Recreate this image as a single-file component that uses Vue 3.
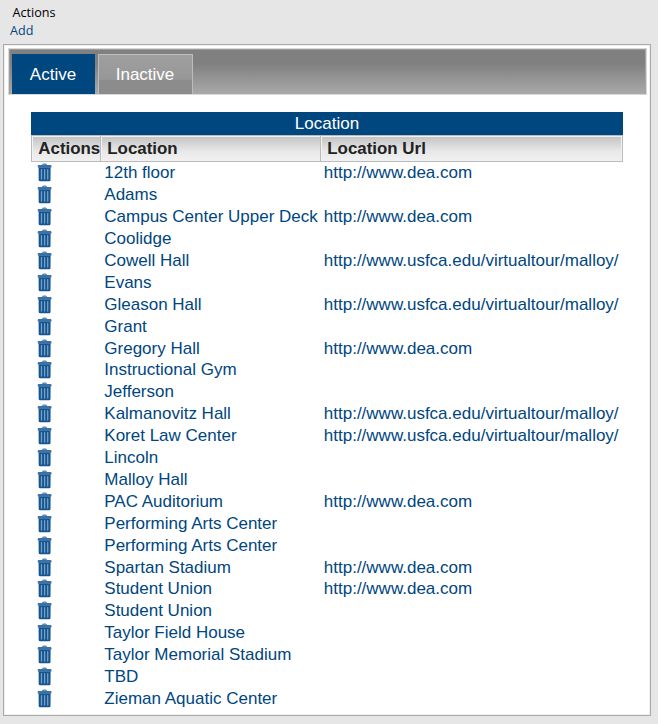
<script setup>
const dea = 'http://www.dea.com'
const tour = 'http://www.usfca.edu/virtualtour/malloy/'
const rows = [
  ['12th floor', dea],
  ['Adams', ''],
  ['Campus Center Upper Deck', dea],
  ['Coolidge', ''],
  ['Cowell Hall', tour],
  ['Evans', ''],
  ['Gleason Hall', tour],
  ['Grant', ''],
  ['Gregory Hall', dea],
  ['Instructional Gym', ''],
  ['Jefferson', ''],
  ['Kalmanovitz Hall', tour],
  ['Koret Law Center', tour],
  ['Lincoln', ''],
  ['Malloy Hall', ''],
  ['PAC Auditorium', dea],
  ['Performing Arts Center', ''],
  ['Performing Arts Center', ''],
  ['Spartan Stadium', dea],
  ['Student Union', dea],
  ['Student Union', ''],
  ['Taylor Field House', ''],
  ['Taylor Memorial Stadium', ''],
  ['TBD', ''],
  ['Zieman Aquatic Center', ''],
]
</script>

<template>
  <div class="page">
    <div class="menu">
      <div class="menu-title">Actions</div>
      <a class="menu-link">Add</a>
    </div>
    <div class="panel">
      <div class="tabs">
        <div class="tab active"><span>Active</span></div>
        <div class="tab"><span>Inactive</span></div>
      </div>
      <div class="table">
        <div class="caption">Location</div>
        <div class="head">
          <div class="th">Actions</div>
          <div class="th">Location</div>
          <div class="th">Location Url</div>
        </div>
        <div class="body">
          <div v-for="(r, i) in rows" :key="i" class="row">
            <div class="icon">
              <svg width="15" height="19" viewBox="0 0 15 19">
                <path d="M5.2 2.4q0-1.5 1-1.5h2.6q1 0 1 1.5" fill="#6f98be" stroke="#5584b0" stroke-width=".8" />
                <rect x=".7" y="2" width="13.8" height="2.7" rx="1" fill="#3a72a5" />
                <path d="M1.6 4.5h12l-.1 12.4q0 1.4-1.4 1.4H3.1q-1.4 0-1.4-1.4z" fill="#145490" />
                <path d="M4.5 6.6v9.4M7.6 6.6v9.4M10.7 6.6v9.4" stroke="#76a0c6" stroke-width="1.3" stroke-linecap="round" />
              </svg>
            </div>
            <div class="name">{{ r[0] }}</div>
            <div class="url">{{ r[1] }}</div>
          </div>
        </div>
      </div>
    </div>
  </div>
</template>

<style>
body {
  background: #e6e6e6;
}
</style>

<style scoped>
.page {
  box-sizing: border-box;
  width: 658px;
  height: 724px;
  overflow: hidden;
  background: #e6e6e6;
  padding-left: 3px;
  font-family: "Liberation Sans", Arial, sans-serif;
  font-size: 17px;
  color: #00467f;
}
.menu {
  height: 44px;
  box-sizing: border-box;
  padding: 4px 0 0 7px;
  font: 12.6px/18px "Open Sans", "Noto Sans", sans-serif;
}
.menu-title {
  color: #000;
  padding-left: 2.6px;
}
.menu-link {
  display: block;
  color: #00467f;
}
.panel {
  box-sizing: border-box;
  width: 648px;
  height: 672px;
  border: 1px solid #aaa;
  background: #fff;
  padding: 3px 4px;
  box-shadow: inset 0 0 0 1px #f0f0f0;
}
.tabs {
  box-sizing: border-box;
  height: 47px;
  width: 639px;
  border: 1px solid #d8d8d8;
  padding: 5px 3px 0;
  display: flex;
  gap: 3px;
  background: linear-gradient(#808080 0%, #808080 32%, #a9a9a9 100%);
  box-shadow: inset 0 1px 0 #9c9c9c, inset 1px 0 0 #9c9c9c, inset -1px 0 0 #a4a4a4;
}
.tab {
  box-sizing: border-box;
  height: 40px;
  width: 95px;
  display: flex;
  justify-content: center;
  line-height: 39px;
  padding-right: 1px;
  color: #fff;
  border: 1px solid #bcbcbc;
  border-bottom: 0;
  background: linear-gradient(#9f9f9f 0%, #979797 62%, #8c8c8c 66%, #8c8c8c 100%);
}
.tab.active {
  width: 83px;
  border: 0;
  line-height: 41px;
  background: #00467f;
}
.table {
  width: 592px;
  margin: 17px 0 0 23px;
}
.caption {
  height: 23px;
  line-height: 23px;
  text-align: center;
  color: #fff;
  background: #00467f;
}
.head {
  display: grid;
  grid-template-columns: 69px 220px 1fr;
  box-sizing: border-box;
  height: 27px;
  border: 1px solid #bbb;
  background: linear-gradient(#c2c2c2, #e8e8e8 60%, #f1f1f1);
}
.th {
  box-sizing: border-box;
  padding-left: 6.3px;
  line-height: 25px;
  font-size: 16.9px;
  font-weight: bold;
  color: #222;
  white-space: nowrap;
  border-right: 1px solid #bbb;
  box-shadow: inset 1px 1px 0 #f2f2f2;
}
.th:last-child {
  border-right: 0;
  box-shadow: inset 1px 1px 0 #f2f2f2, inset -1px 0 0 #f2f2f2;
}
.body {
  padding-top: 0.28px;
}
.row {
  display: grid;
  grid-template-columns: 73.3px 219.5px 1fr;
  height: 21.91px;
  line-height: 21.91px;
  white-space: nowrap;
}
.icon {
  padding: 1px 0 0 6px;
  line-height: 0;
}
</style>
